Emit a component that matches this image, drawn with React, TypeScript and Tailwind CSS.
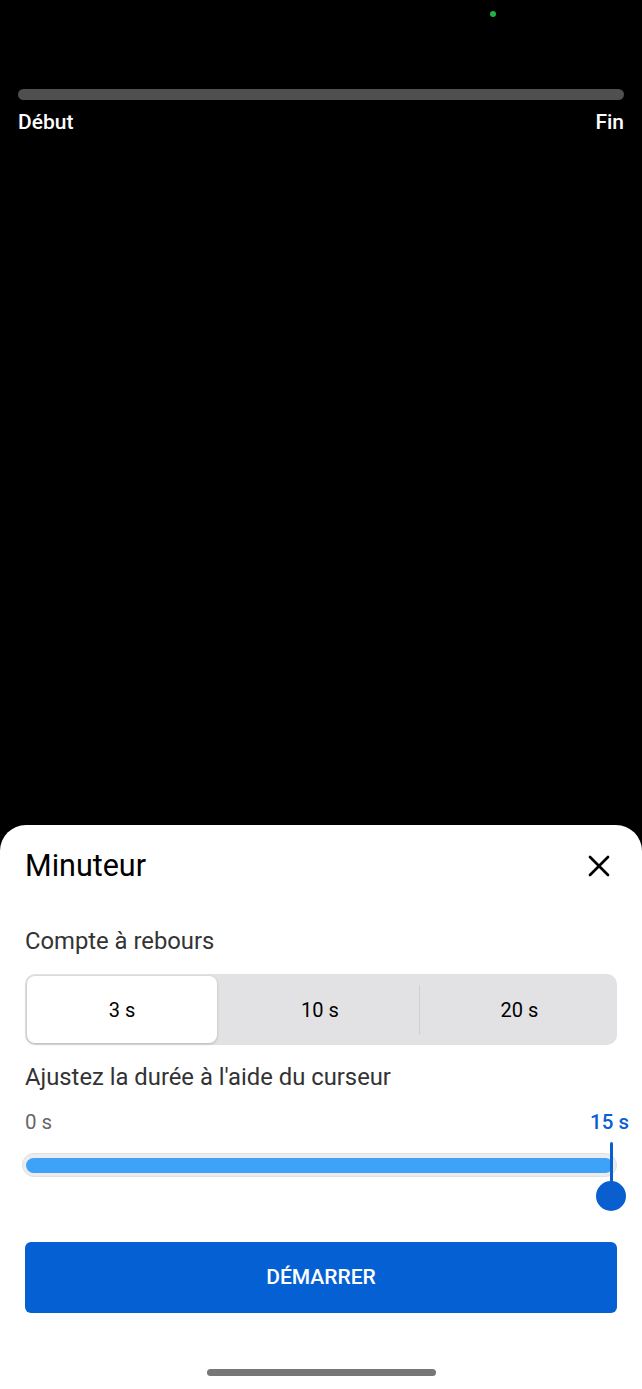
import { X } from "lucide-react";

export default function App() {
  return (
    <div className="h-[1389px] w-[642px] bg-black flex flex-col font-['Roboto',sans-serif] overflow-hidden">
      {/* camera preview area */}
      <div className="flex-1">
        <div className="pt-[11px] pl-[490px]">
          <div className="w-[6px] h-[6px] rounded-full bg-[#1fb347]"></div>
        </div>
        <div className="mt-[72px] mx-[18px] h-[11px] rounded-full bg-[#4f4f4f]"></div>
        <div className="mx-[18px] mt-[9px] flex justify-between text-white text-[21px] font-medium leading-[26px]">
          <span>Début</span>
          <span>Fin</span>
        </div>
      </div>

      {/* bottom sheet */}
      <div className="h-[564px] bg-white rounded-t-[26px] px-[25px] pt-[21px]">
        <div className="flex items-center justify-between h-[40px]">
          <h1 className="text-[30.5px] text-black leading-[40px]">Minuteur</h1>
          <X className="w-[36px] h-[36px] text-black" strokeWidth={1.8} />
        </div>

        <p className="mt-[41px] text-[23.8px] leading-[28px] text-[#333]">Compte à rebours</p>

        <div className="mt-[19px] h-[71px] rounded-[10px] bg-[#e2e2e4] p-[2px] flex items-center">
          <button className="h-[67px] w-[190px] rounded-[8px] bg-white shadow-[0_1px_3px_rgba(0,0,0,0.2)] text-[20px] text-black">
            3 s
          </button>
          <button className="w-[202px] pl-[4px] h-[67px] text-[20px] text-black">10 s</button>
          <div className="w-px h-[50px] bg-[#cfcfd2]"></div>
          <button className="flex-1 pl-[4px] h-[67px] text-[20px] text-black">20 s</button>
        </div>

        <p className="mt-[18px] text-[23.8px] leading-[28px] text-[#333]">Ajustez la durée à l'aide du curseur</p>

        <div className="mt-[18px] flex justify-between items-center h-[26px] text-[20.5px] leading-[26px] mr-[-12px]">
          <span className="text-[#666]">0 s</span>
          <span className="text-[#0a5fd0] font-medium">15 s</span>
        </div>

        <div className="relative mt-[18px] ml-[-3px] h-[24px] rounded-full bg-[#ececef] border border-[#e0e0e4] flex items-center px-[3px]">
          <div className="h-[15px] w-full rounded-full bg-[#3ea3f8]"></div>
          <div className="absolute left-[573px] top-[-12px] flex flex-col items-center">
            <div className="w-[3px] h-[46px] bg-[#0a5fd0] rounded-full"></div>
            <div className="w-[30px] h-[30px] rounded-full bg-[#0a5fd0] mt-[-7px]"></div>
          </div>
        </div>

        <button className="mt-[65px] w-full h-[71px] rounded-[6px] bg-[#0560d4] text-white text-[21px] font-medium">
          DÉMARRER
        </button>

        <div className="mt-[56px] flex justify-center">
          <div className="w-[229px] h-[7px] rounded-full bg-[#777]"></div>
        </div>
      </div>
    </div>
  );
}
